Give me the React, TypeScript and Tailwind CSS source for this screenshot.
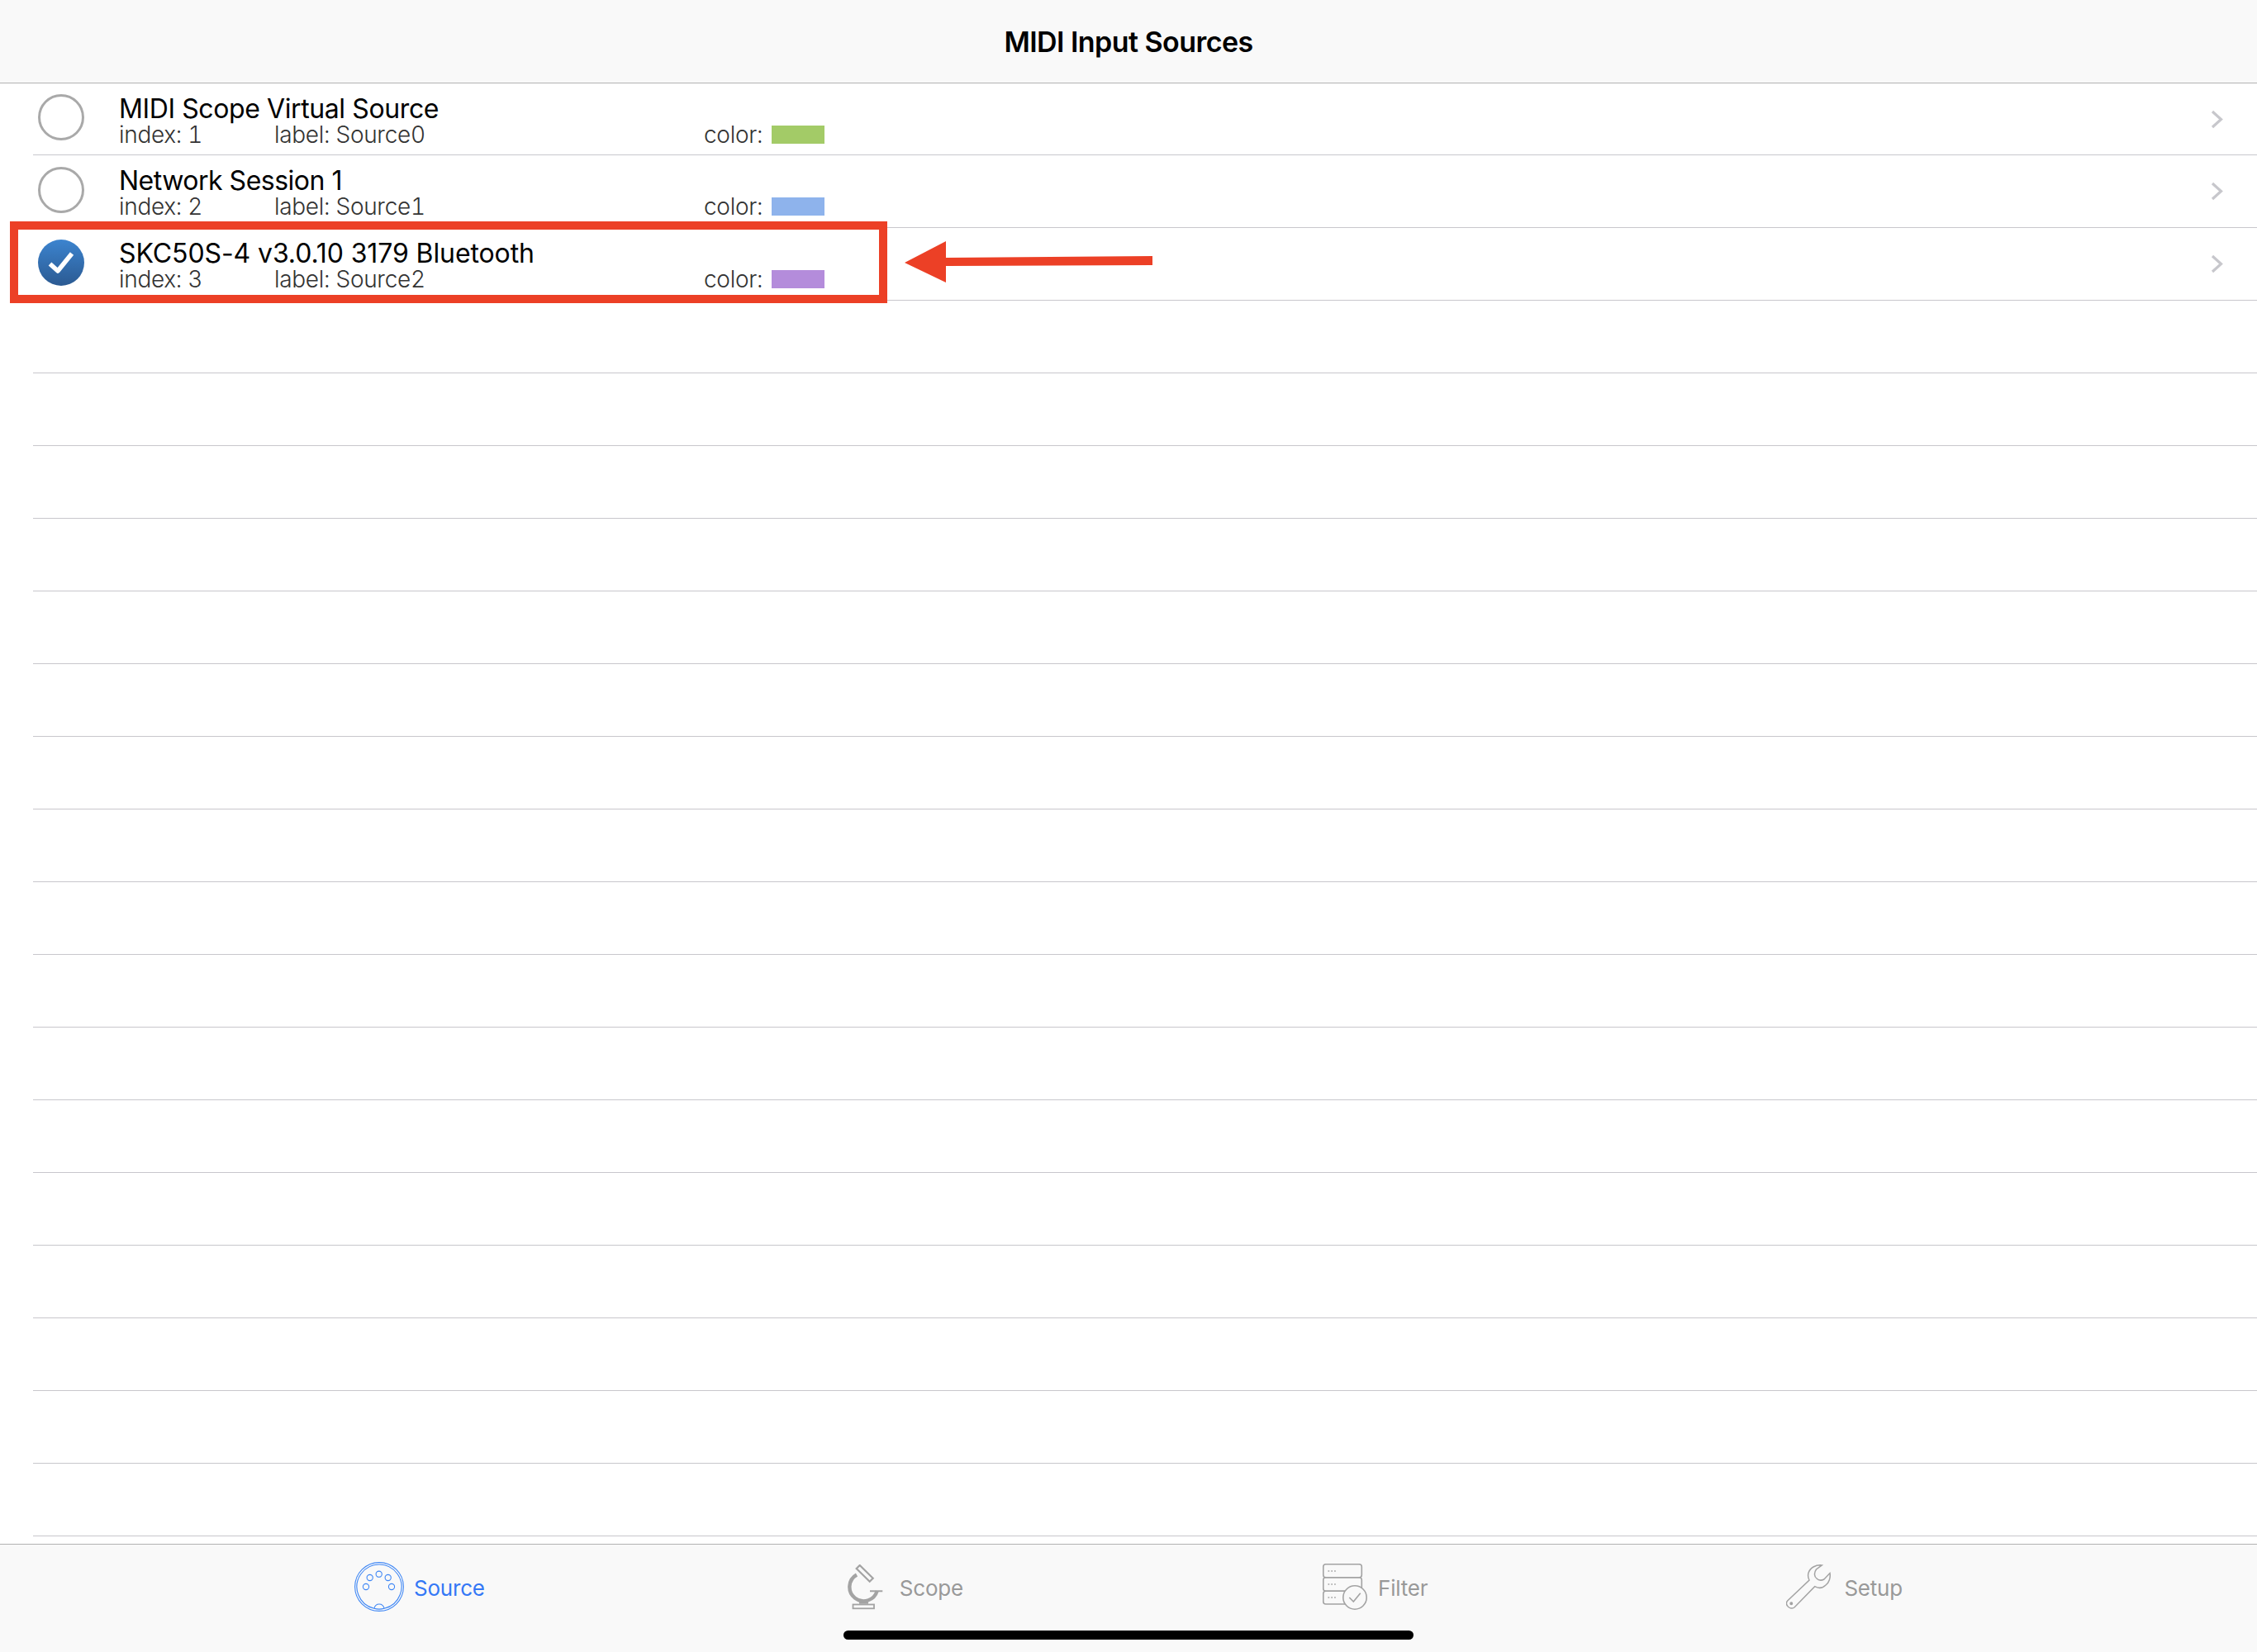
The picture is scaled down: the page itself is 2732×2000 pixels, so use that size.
import React from "react";

const sources = [
  { name: "MIDI Scope Virtual Source", index: 1, label: "Source0", swatch: "bg-[#a3cb67]", nameCls: "tracking-[-0.4px]", on: false },
  { name: "Network Session 1", index: 2, label: "Source1", swatch: "bg-[#8eb3ec]", nameCls: "tracking-[-0.5px]", on: false },
  { name: "SKC50S-4 v3.0.10 3179 Bluetooth", index: 3, label: "Source2", swatch: "bg-[#b48cdb]", nameCls: "tracking-[-0.1px]", on: true },
];
const emptyRows = Array.from({ length: 17 }, (_, i) => i);

function Radio({ on }: { on: boolean }) {
  return (
    <svg width="56" height="56" viewBox="0 0 56 56" className="shrink-0 mb-[4px]">
      <defs>
        <linearGradient id="radioFill" x1="0" y1="0" x2="0" y2="1">
          <stop offset="0" stopColor="#3c84cf" />
          <stop offset="1" stopColor="#2b5a92" />
        </linearGradient>
      </defs>
      {on ? (
        <>
          <circle cx="28" cy="28" r="28" fill="url(#radioFill)" />
          <path d="M14.5 29.5 L24 38 L41 17" fill="none" stroke="#ffffff" strokeWidth="5.5" strokeLinejoin="round" />
        </>
      ) : (
        <circle cx="28" cy="28" r="26.5" fill="none" stroke="#a9a9a9" strokeWidth="3" />
      )}
    </svg>
  );
}

function Chevron() {
  return (
    <svg width="15" height="23" viewBox="0 0 15 23" className="shrink-0">
      <path d="M2 2 L12.5 11.5 L2 21" fill="none" stroke="#c7c7cc" strokeWidth="3.2" />
    </svg>
  );
}

function MidiIcon() {
  return (
    <svg width="60" height="60" viewBox="0 0 60 60" fill="none" stroke="#3f87f5" strokeWidth="1.1">
      <circle cx="30" cy="30" r="29.4" />
      <path d="M23.8 56.3 A27 27 0 1 1 36.2 56.3" />
      <path d="M23.8 56.3 C25 52 27 51 30 51 C33 51 35 52 36.2 56.3 " />
      <path d="M23.8 56.3 Q30 58 36.2 56.3" />
      <circle cx="29.7" cy="14.7" r="3.6" />
      <circle cx="18.7" cy="19" r="3.6" />
      <circle cx="40.7" cy="19" r="3.6" />
      <circle cx="14" cy="30" r="3.6" />
      <circle cx="45" cy="30" r="3.6" />
    </svg>
  );
}

function ScopeIcon() {
  return (
    <svg width="43" height="55" viewBox="0 0 43 55" fill="none" stroke="#a3a3a3">
      <path d="M10.7 5 L14.7 1 L30.7 16.7 L26.7 20.7 Z" strokeWidth="2.2" />
      <path d="M11 12.5 A17 17 0 1 0 35.7 32" strokeWidth="4.4" />
      <path d="M27 32.3 H42.3" strokeWidth="2" />
      <path d="M19.5 44 V47" strokeWidth="6" />
      <path d="M14 46.5 H25" strokeWidth="2.5" />
      <rect x="6.5" y="48.5" width="25.5" height="4.8" strokeWidth="1.8" />
    </svg>
  );
}

function FilterIcon() {
  return (
    <svg width="55" height="56" viewBox="0 0 55 56" fill="none" stroke="#a3a3a3" strokeWidth="1.6">
      <rect x="0.8" y="0.8" width="46.5" height="16" rx="3" />
      <rect x="0.8" y="16.8" width="46.5" height="16.4" rx="3" />
      <rect x="0.8" y="33.2" width="46.5" height="15.8" rx="3" />
      <path d="M6.5 9 H15.8 M6.5 25 H15.8 M6.5 41 H15.8" strokeDasharray="1.7 2.1" />
      <circle cx="39" cy="41" r="14.2" fill="#f9f9f9" />
      <path d="M32.3 41 L37.3 46 L45.7 35.7" />
    </svg>
  );
}

function SetupIcon() {
  return (
    <svg width="55" height="55" viewBox="0 0 55 55" fill="none" stroke="#a3a3a3" strokeWidth="1.5">
      <path d="M1.7 44 L28 19 C25 13 27 6.5 33 3 C36 1.3 40 0.5 43.3 0.9 L36.5 6 C33.5 10 34 15 37 17 C40 20 43 19.5 46 18 L53 10.5 C54 16 52 22 48 25 C44 29 39 29 34.7 26.7 L10 52 C7 54 3 53 1.5 50 C0 48 0 46 1.7 44 Z" />
      <circle cx="6.3" cy="47.3" r="1.2" fill="#a3a3a3" />
    </svg>
  );
}

export default function App() {
  return (
    <div className="relative w-[2732px] h-[2000px] overflow-hidden bg-white font-['Inter',sans-serif]">
      <header className="h-[101px] bg-[#f9f9f9] border-b border-[#b2b2b2] flex items-center justify-center">
        <h1 className="text-[34px] font-semibold text-black tracking-[-0.55px]">MIDI Input Sources</h1>
      </header>

      <main className="h-[1768px] pl-[40px]">
        {sources.map((s, i) => (
          <div
            key={s.index}
            className={`${i === 0 ? "h-[87px]" : "h-[88px]"} border-b border-[#c8c7cc] flex items-center pl-[6px] pr-[41px]`}
          >
            <Radio on={s.on} />
            <div className="ml-[42px] flex-1 flex flex-col">
              <div className={`text-[32px] leading-[36px] text-black ${s.nameCls}`}>{s.name}</div>
              <div className="flex items-center text-[28px] leading-[24px] mt-[1px] text-[#333333] tracking-[-0.3px] font-light tabular-nums">
                <span className="w-[188px]">index: {s.index}</span>
                <span className="w-[520px]">label: {s.label}</span>
                <span className="w-[82px]">color:</span>
                <span className={`w-[64px] h-[22px] ${s.swatch}`} />
              </div>
            </div>
            <Chevron />
          </div>
        ))}
        {emptyRows.map((i) => (
          <div key={i} className="h-[88px] border-b border-[#c8c7cc]" />
        ))}
      </main>

      <footer className="relative h-[131px] border-t border-[#b2b2b2] bg-[#f9f9f9] pt-[20px] pl-[429px] flex items-start text-[26px] text-[#999999] tracking-[-0.2px]">
        <div className="flex items-center gap-[12px] h-[62px] text-[#3478f6]">
          <MidiIcon />
          <span className="mt-[2px]">Source</span>
        </div>
        <div className="ml-[439px] flex items-center gap-[20px] h-[62px]">
          <ScopeIcon />
          <span className="mt-[2px]">Scope</span>
        </div>
        <div className="ml-[435px] flex items-center gap-[12px] h-[62px]">
          <FilterIcon />
          <span className="mt-[2px]">Filter</span>
        </div>
        <div className="ml-[434px] flex items-center gap-[15px] h-[62px]">
          <SetupIcon />
          <span className="mt-[2px]">Setup</span>
        </div>
        <div className="absolute left-[1021px] top-[104px] w-[690px] h-[11px] rounded-full bg-black" />
      </footer>

      <div className="absolute left-[12px] top-[268px] w-[1062px] h-[99px] border-[10px] border-[#ec4026]" />
      <svg className="absolute left-[1095px] top-[292px]" width="300" height="50" viewBox="0 0 300 50">
        <path d="M0 26 L50 0 L50 20 L300 18 L300 29 L50 30 L50 50 Z" fill="#ec4026" />
      </svg>
    </div>
  );
}
